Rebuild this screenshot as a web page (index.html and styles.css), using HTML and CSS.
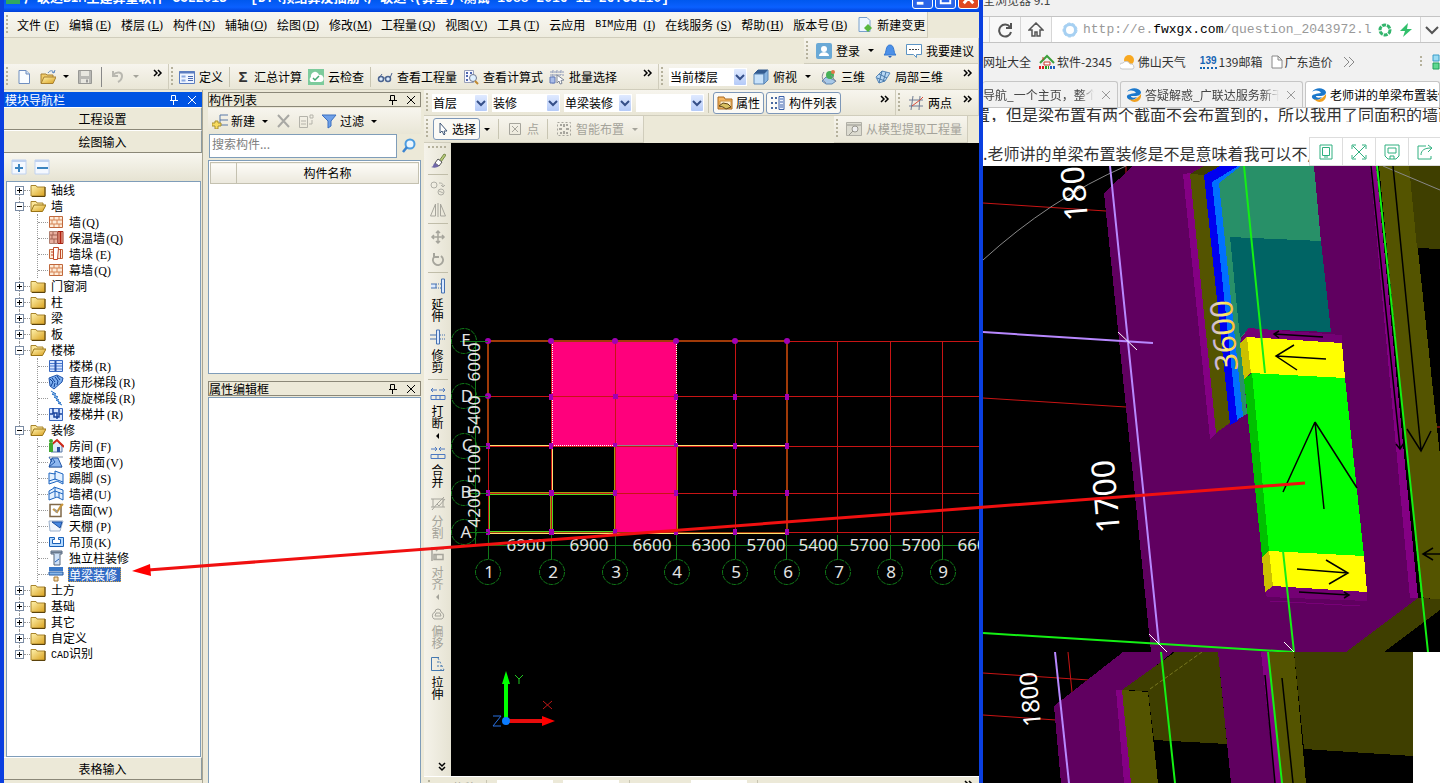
FILE: index.html
```html
<!DOCTYPE html>
<html lang="zh-CN">
<head>
<meta charset="utf-8">
<title>广联达BIM土建算量软件</title>
<link rel="stylesheet" href="styles.css">
</head>
<body>
<svg class="defs" aria-hidden="true">
<defs>
<linearGradient id="gf" x1="0" y1="0" x2="1" y2="1"><stop offset="0" stop-color="#fff3b0"/><stop offset="1" stop-color="#d9a01c"/></linearGradient>
<linearGradient id="gt" x1="0" y1="0" x2="0" y2="1"><stop offset="0.2" stop-color="#b9a6ff"/><stop offset="0.55" stop-color="#fff36a"/><stop offset="0.85" stop-color="#ffae2a"/></linearGradient>
<symbol id="folder" viewBox="0 0 16 16"><path d="M1 3.500h5l1 1.500h8v9H1z" fill="url(#gf)" stroke="#a8842c"/><path d="M15 5v9.500H2" fill="none" stroke="#5c430c"/></symbol>
<symbol id="folder-open" viewBox="0 0 16 16"><path d="M1 13V3.500h5l1 1.500h6v3" fill="#fbe69b" stroke="#a8842c"/><path d="M1 13.500l3-6.500h12l-3.500 6.500z" fill="url(#gf)" stroke="#9a7415"/></symbol>
<symbol id="brick" viewBox="0 0 16 16"><path d="M1.500 2.500h13v11h-13z" fill="#fdebd8" stroke="#c0683c"/><path d="M2 6h12M2 10h12M6 3v3M11 3v3M4 6v4M9 6v4M6 10v3M11 10v3" stroke="#d68455" fill="none"/></symbol>
<symbol id="brick-warm" viewBox="0 0 16 16"><path d="M1.500 1.500h8v12h-8z" fill="#e8b0a0" stroke="#b08070"/><path d="M2 5h7M2 9h7M5 2v3M4 5v4M6 9v4" stroke="#a06050"/><path d="M10 1.500h5v12h-5z" fill="#f5c8b0" stroke="#a02818"/><path d="M12.500 1v13" stroke="#b02010" stroke-width="2"/></symbol>
<symbol id="brick-pier" viewBox="0 0 16 16"><path d="M1.500 3.500h13v9h-13z" fill="#fdebd8" stroke="#c0683c"/><path d="M5.500 1.500h5l-1 12h-4zM12.500 3v10M3 6h2M3 9h2" fill="#fff" stroke="#c04828"/></symbol>
<symbol id="stair" viewBox="0 0 16 16"><path d="M1.500 2.500h13v11h-13z" fill="#d5e4ff" stroke="#3868c0"/><path d="M2 5.500h12M2 8h12M2 11h12" stroke="#4878d0"/><path d="M7.500 3v10" stroke="#2450a8" stroke-width="2"/></symbol>
<symbol id="stair-s" viewBox="0 0 16 16"><path d="M1 4l8-3 6 3-1 4-8 7-4-3z" fill="#7fb0f0" stroke="#1c50a8"/><path d="M2 5l3 3M4 4l3 4M7 3l3 4M9 2l3 4M5 8l-2 4M7 9l-1 4M10 7l-1 4" stroke="#0c3c90"/></symbol>
<symbol id="stair-z" viewBox="0 0 16 16"><path d="M3 1l5 3H4l6 3H6l5 3H8l5 3h-3l4 2" fill="none" stroke="#2470c8"/></symbol>
<symbol id="stair-w" viewBox="0 0 16 16"><path d="M1.500 2.500h13v12h-13z" fill="#d5e4ff" stroke="#3868c0"/><path d="M5 2v5h4v6M11 3v8H6V7M2 8h3M11 8h3" fill="none" stroke="#16409c" stroke-width="1.500"/></symbol>
<symbol id="room" viewBox="0 0 16 16"><path d="M3 8v6h11V8L9 2z" fill="#dfeaf8" stroke="#5878a8"/><path d="M2 8l7-6 7 7" fill="none" stroke="#d02818" stroke-width="2"/><path d="M9 9h3v5H9z" fill="#2850a0"/><path d="M1 5h4v9H1z" fill="#40a830"/><circle cx="3" cy="3" r="2" fill="#40a830"/></symbol>
<symbol id="floor" viewBox="0 0 16 16"><path d="M1 3h14M1 13h13l-3-3" fill="none" stroke="#8a96a8"/><path d="M4 4h6l4 9H1z" fill="#8fb8f0" stroke="#2458a8"/><path d="M1 3l3 5M4 4l3 4-6 5" stroke="#2458a8" fill="none"/></symbol>
<symbol id="skirt" viewBox="0 0 16 16"><path d="M1 3l6 1V1l8 3v10l-6-3-2 1-6 2z" fill="#e4f1ff" stroke="#1c64c0"/><path d="M7 3v7M1 11l6-2 8 3" stroke="#1c64c0" fill="none"/></symbol>
<symbol id="apron" viewBox="0 0 16 16"><path d="M1 5l5-3v-1l9 3v10l-6-3-8 3z" fill="#e4f1ff" stroke="#1c64c0"/><path d="M1 8l6-3 8 3M7 2v9M11 6v6" stroke="#1c64c0" fill="none"/></symbol>
<symbol id="wallface" viewBox="0 0 16 16"><path d="M2 2.500h11v12H2z" fill="#fff" stroke="#806848" stroke-width="1.500"/><path d="M5 7l4 3 4-6 2-2" stroke="#c8963c" fill="none" stroke-width="2"/><path d="M6 6l4 3-2 2z" fill="#999"/></symbol>
<symbol id="ceil" viewBox="0 0 16 16"><path d="M1 3h14l-3 10H2z" fill="#f0f5fc" stroke="#9ab0cc"/><path d="M4 4h10l-2 6z" fill="#4888e0" stroke="#1c50a0"/></symbol>
<symbol id="hang" viewBox="0 0 16 16"><path d="M1.500 3.500h5v2h-2v4h8v-4h-2v-2h5v9h-14z" fill="#b8dcff" stroke="#1860b8"/></symbol>
<symbol id="col" viewBox="0 0 16 16"><path d="M3 1h11v3h-2v11H6V4H3z" fill="#cfe2f8" stroke="#56677c"/><path d="M3 1.500h11v2H3z" fill="#68788c"/><path d="M7 12l4-3" stroke="#2460b8"/></symbol>
<symbol id="beam" viewBox="0 0 16 16"><path d="M1 1h14v4H1z" fill="#3a78c8"/><path d="M1 6h14v3H1z" fill="#88b8ec" stroke="#2458a0"/><path d="M6 11h4v4H6z" fill="#f8dcae" stroke="#a87830"/></symbol>
<symbol id="newdoc" viewBox="0 0 16 16"><path d="M3 1.500h7l3.500 3.500v9.500H3z" fill="#fafdff" stroke="#6f8fc0"/><path d="M10 1.500V5h3.500" fill="#cfe0f5" stroke="#6f8fc0"/></symbol>
<symbol id="open" viewBox="0 0 16 16"><path d="M1 14V5h5l1 1h6v3" fill="#f0cc6a" stroke="#a88030"/><path d="M1 14.500L4 8h12l-3 6.500z" fill="url(#gf)" stroke="#a88030"/><path d="M8 4c2-3 5-3 6 0m-2-1l2 1 1-3" fill="none" stroke="#5d88c0"/></symbol>
<symbol id="save" viewBox="0 0 16 16"><path d="M1.500 1.500h13v13h-13z" fill="#b8b8b4" stroke="#989894"/><path d="M4 2h8v5H4zM4 10h8v4H4z" fill="#e8e7e0"/><path d="M9 10.500h2v3H9z" fill="#999"/></symbol>
<symbol id="undo" viewBox="0 0 16 16"><path d="M3 6c4-4 9-3 9 1 0 3-2 5-4 6M3 2v5h5" fill="none" stroke="#b9b8b0" stroke-width="2"/></symbol>
<symbol id="define" viewBox="0 0 16 16"><path d="M.5 2.500h15v12H.5z" fill="#eef4ff" stroke="#5a7cc0"/><path d="M.5 2h15v2.500H.5z" fill="#5a7cc0"/><path d="M2.500 6.500h4v2h-4zM2.500 10.500h4v2h-4z" fill="#8aa8e0"/><path d="M9 7.500h5M9 9.500h5M9 11.500h5" stroke="#4868b0"/></symbol>
<symbol id="cloudok" viewBox="0 0 16 16"><path d="M0 0h16v16H0z" fill="#7ccb9c"/><path d="M3 13a3 3 0 0 1 0-5 4 4 0 0 1 8-2 3.500 3.500 0 0 1 2 7z" fill="#fff"/><path d="M5 9l2 2 4-4" stroke="#40a870" stroke-width="1.500" fill="none"/></symbol>
<symbol id="glasses" viewBox="0 0 16 16"><circle cx="4" cy="10" r="2.500" fill="#dfeeff" stroke="#4c6490" stroke-width="1.500"/><circle cx="11" cy="10" r="2.500" fill="#dfeeff" stroke="#4c6490" stroke-width="1.500"/><path d="M6 9h3M2 9l3-4M13 9l2-5" stroke="#4c6490" fill="none"/></symbol>
<symbol id="calc" viewBox="0 0 16 16"><path d="M1.500 1.500h9v12h-9z" fill="#f8f8ff" stroke="#98a0b8"/><path d="M3 4h2M7 4h2M3 7h2M3 11h2" stroke="#5068b0" stroke-width="2"/><circle cx="10" cy="9" r="3.500" fill="#dff0ff" stroke="#707890"/><path d="M12 12l3 3" stroke="#c08830" stroke-width="2"/></symbol>
<symbol id="batch" viewBox="0 0 16 16"><path d="M1 3h14M1 6h14M4 1v14M8 1v5M12 1v5" stroke="#8c98b8" stroke-dasharray="3 1"/><path d="M1 8h5v6H1z" fill="#a8bce8" stroke="#6078b8"/><path d="M8 6l7 5-3 .5 1 3-2 .5-1-3-2 2z" fill="#fff" stroke="#808898"/></symbol>
<symbol id="cube" viewBox="0 0 16 16"><path d="M1 5l4-4h10l-4 4z" fill="#345c90" stroke="#345c90"/><path d="M1 5h10v10H1z" fill="#c8e2fa" stroke="#5c88b8"/><path d="M11 5l4-4v10l-4 4z" fill="#88b4e0" stroke="#5c88b8"/></symbol>
<symbol id="view3" viewBox="0 0 16 16"><path d="M1 12l4-4 6 2 4 2-4 3H5z" fill="#a8c8e8" stroke="#6088b0"/><circle cx="9" cy="6" r="4" fill="#48b058"/><circle cx="12" cy="3" r="2" fill="#e07848"/><path d="M3 3c-3 4-2 8 2 11M10 6l5 7" stroke="#889" fill="none"/></symbol>
<symbol id="part3" viewBox="0 0 16 16"><path d="M1 8l6-6 8 2-5 8-6 2z" fill="#b8d8f4" stroke="#5888b8"/><path d="M4 5l8 4M7 2L4 14M11 3L8 13M2 9l8 3" stroke="#4878a8" fill="none"/></symbol>
<symbol id="user" viewBox="0 0 16 16"><rect width="16" height="16" rx="2" fill="#6aa9d6"/><circle cx="8" cy="6" r="3" fill="#fff"/><path d="M3 13c0-5 10-5 10 0z" fill="#fff"/></symbol>
<symbol id="bell" viewBox="0 0 16 16"><path d="M2 12c3-2 1-10 6-10s3 8 6 10z" fill="#4c90e8" stroke="#3478d0"/><path d="M6 13h4l-2 2z" fill="#2860b8"/></symbol>
<symbol id="chat" viewBox="0 0 16 16"><path d="M.5 1.500h15v10h-5v3l-3-3h-7z" fill="#fff" stroke="#5c94c4"/><path d="M3 6.500h10" stroke="#444" stroke-dasharray="2 1"/></symbol>
<symbol id="docadd" viewBox="0 0 16 16"><path d="M2 .5h8l3 3v11H2z" fill="#eef7ff" stroke="#78a0cc"/><path d="M11 7l4 4-4 4-4-4z" fill="#58b840"/></symbol>
<symbol id="pin" viewBox="0 0 12 12"><path d="M3.500 1.500h4v5h-4zM7.500 2v5M2 6.500h8M5.500 7v4" fill="none" stroke="currentColor"/></symbol>
<symbol id="close" viewBox="0 0 12 12"><path d="M2 2l8 8M10 2l-8 8" fill="none" stroke="currentColor"/></symbol>
<symbol id="add" viewBox="0 0 16 16"><path d="M1 1h14v14H1z" fill="#f4f8ff" stroke="#c0d2f0"/><path d="M1 1h14v2H1z" fill="#c0d2f0"/><path d="M8 5v8M4 9h8" stroke="#3c84c0" stroke-width="2"/></symbol>
<symbol id="minus" viewBox="0 0 16 16"><path d="M1 1h14v14H1z" fill="#f4f8ff" stroke="#c0d2f0"/><path d="M1 1h14v2H1z" fill="#c0d2f0"/><path d="M3 9h11" stroke="#3c84c0" stroke-width="2"/></symbol>
<symbol id="newitem" viewBox="0 0 16 16"><path d="M8 2h8M8 7h8M8 12h8M8 2v10" stroke="#5878a8" fill="none"/><path d="M3 8h3v2h3v3H6v3H3v-3H0v-3h3z" fill="#f8dc60" stroke="#a89030"/></symbol>
<symbol id="del" viewBox="0 0 16 16"><path d="M3 2l11 12M14 2L3 14" stroke="#a8a8a4" stroke-width="2"/></symbol>
<symbol id="copyg" viewBox="0 0 16 16"><path d="M1.500 3.500h8v11h-8zM12 2h3v3h-3zM14 7v4h-3M3 8h5M3 11h5" fill="none" stroke="#b4b3aa"/></symbol>
<symbol id="funnel" viewBox="0 0 16 16"><path d="M1 2h14L10 8v5l-3 2V8z" fill="#6ea0e8" stroke="#3c70c0"/></symbol>
<symbol id="mag" viewBox="0 0 16 16"><circle cx="9" cy="6" r="4.500" fill="#eaf6ff" stroke="#4c9ce0" stroke-width="2"/><path d="M6 9l-4 5" stroke="#3c84d0" stroke-width="2.500"/></symbol>
<symbol id="prop" viewBox="0 0 16 16"><path d="M1 2h6l1 2h7v10H1z" fill="#f8b860" stroke="#a86820"/><path d="M3 6h11v7H3z" fill="#fff0d0" stroke="#c89040"/><path d="M2 11l4-3 5 1 3 3-5 2-3-2z" fill="#d8c060" stroke="#604818"/></symbol>
<symbol id="list" viewBox="0 0 16 16"><path d="M1 3h2M1 8h2M1 13h2M5 3h2M5 8h2M5 13h2" stroke="#4868a0" stroke-width="2"/><path d="M9 1.500h5v13H9z" fill="#eef4ff" stroke="#3c60a8"/><path d="M10 4h3M10 7h3M10 10h3M10 12h3" stroke="#3c60a8"/></symbol>
<symbol id="twopt" viewBox="0 0 16 16"><path d="M5 1L3 15M12 1l-1 14M1 5h14M1 11h14" stroke="#707c94"/><path d="M4 11l8-6 3-3" fill="none" stroke="#d84838"/></symbol>
<symbol id="cursor" viewBox="0 0 12 16"><path d="M3 2v10l2-2 2 4 1-1-1-3h3z" fill="#fff" stroke="#405878"/></symbol>
<symbol id="boxx" viewBox="0 0 16 16"><path d="M2.500 2.500h11v11h-11zM5 5l6 6M11 5l-6 6" fill="none" stroke="#a6a59c"/></symbol>
<symbol id="smart" viewBox="0 0 16 16"><path d="M1.500 1.500h13v13h-13z" fill="none" stroke="#a6a59c" stroke-dasharray="2 2"/><path d="M8 3v3M8 10v3M3 8h3M10 8h3M4 4h2M10 4h2M4 12h2M10 12h2" stroke="#908f88" stroke-width="1.500"/></symbol>
<symbol id="extract" viewBox="0 0 16 16"><path d="M.5 1.500h15v13H.5z" fill="#dcdbd0" stroke="#b0afa6"/><circle cx="9" cy="8" r="3" fill="#eee" stroke="#97968e"/><path d="M7 10l-4 4M1 4h14" stroke="#97968e"/></symbol>
<symbol id="brush" viewBox="0 0 16 16"><path d="M9 8l5-7 2 1-5 7z" fill="#b8cc78" stroke="#78884c"/><path d="M5 10l3-4 4 3-3 4z" fill="#fff" stroke="#555"/><path d="M1 14c3 0 2-4 4-4l4 3c-2 2-5 2-8 1z" fill="#7068a8"/></symbol>
<symbol id="copy2" viewBox="0 0 16 16"><circle cx="4" cy="5" r="3" fill="none" stroke="#b0afa6"/><circle cx="11" cy="12" r="3" fill="none" stroke="#b0afa6"/><path d="M9 11l4 2M9 3c4 0 4 1 4 4m-2-2l2 2 2-2" fill="none" stroke="#b0afa6"/></symbol>
<symbol id="mirror" viewBox="0 0 16 16"><path d="M5.500 2v12h-5zM10.500 2v12h5zM8 1v14" fill="none" stroke="#a6a59c"/></symbol>
<symbol id="move" viewBox="0 0 16 16"><path d="M8 2v12M2 8h12M6 4l2-2 2 2M6 12l2 2 2-2M4 6L2 8l2 2M12 6l2 2-2 2" fill="none" stroke="#a6a59c" stroke-width="1.500"/></symbol>
<symbol id="rotate" viewBox="0 0 16 16"><path d="M4 6a5 5 0 1 0 7-1M4 2v4h5" fill="none" stroke="#a6a59c" stroke-width="2"/></symbol>
<symbol id="extend" viewBox="0 0 16 16"><path d="M11.500 1v14h3V1zM1 6h5v4H1" fill="#dceaff" stroke="#4470b0"/><path d="M6 6h5M6 10h5" stroke="#4470b0" stroke-dasharray="1 1"/></symbol>
<symbol id="trim" viewBox="0 0 16 16"><path d="M6.500 1v14h3V1z" fill="#dceaff" stroke="#4470b0"/><path d="M0 6h6M0 10h6" stroke="#4470b0"/><path d="M10 6h6M10 10h6" stroke="#4470b0" stroke-dasharray="1 1"/></symbol>
<symbol id="break" viewBox="0 0 16 16"><path d="M1 10.500h14v4H1zM6 10v4M10 10v4M7 5H1M3 3L1 5l2 2M9 5h6M13 3l2 2-2 2" fill="none" stroke="#4c78c0"/></symbol>
<symbol id="merge" viewBox="0 0 16 16"><path d="M1 10.500h14v4H1zM8 10v4M1 5h6M5 3l2 2-2 2M15 5H9M11 3L9 5l2 2" fill="none" stroke="#4c78c0"/></symbol>
<symbol id="split" viewBox="0 0 16 16"><path d="M1 4h13M1 12h14M3 4v8M13 4v8M2 15l5-6 7-7M7 9l2 2 6-7" fill="none" stroke="#a6a59c"/></symbol>
<symbol id="align" viewBox="0 0 16 16"><path d="M2 1v14M4 3h10M4 8.500h9v5H4zM6 8v5M9 2L6 5" fill="none" stroke="#a6a59c" stroke-width="1.500"/></symbol>
<symbol id="offset" viewBox="0 0 16 16"><path d="M5 7a3 3 0 1 1 6 0 4 4 0 0 1 1 7H4a4 4 0 0 1 1-7zM6 8h4l1 3H5z" fill="none" stroke="#a6a59c"/></symbol>
<symbol id="stretch" viewBox="0 0 16 16"><path d="M9 1.500H1.500v13H14" fill="none" stroke="#4478b0"/><path d="M8 2l6 12M8 5v8M11 9v5" fill="none" stroke="#4478b0" stroke-dasharray="2 2"/></symbol>
<symbol id="chev" viewBox="0 0 12 16"><path d="M2 6l4 4 4-4" fill="none" stroke="#354f88" stroke-width="2"/></symbol>
<symbol id="more" viewBox="0 0 10 8"><path d="M1 1l3 3-3 3M5 1l3 3-3 3" fill="none" stroke="#000" stroke-width="1.500"/></symbol>
<symbol id="elogo" viewBox="0 0 18 16"><path d="M2 5C5 0 14 0 16 5c0 3-3 4-6 4H6c0 2 3 2 6 1-3 5-11 3-10-1 1-2 4-2 9-3C9 3 5 3 2 5z" fill="#1b78cc"/><path d="M4 12c4 2 8 0 12-5 1 7-7 11-12 5z" fill="#f0a020"/></symbol>
</defs>
</svg>

<div class="desktop">
<main class="app">
  <header class="titlebar">
    <span class="badge">广</span>
    <span class="caption">广联达<span class="tm">BIM</span>土建算量软件<span class="tm"> GCL2013 - [D:\</span>预结算及抽筋<span class="tm">\</span>广联达<span class="tm">\(</span>算量<span class="tm">)\</span>测试<span class="tm">-1988-2016-12-26.GCL10]</span></span>
    <span class="winbtns"><button aria-label="最小化"><svg viewBox="0 0 20 20"><path d="M4 15h7" stroke="#fff" stroke-width="3"/></svg></button><button aria-label="最大化"><svg viewBox="0 0 20 20"><path d="M5 4h10v11H5z" fill="none" stroke="#fff" stroke-width="2"/></svg></button><button class="x" aria-label="关闭"><svg viewBox="0 0 20 20"><path d="M5 4l10 11M15 4L5 15" stroke="#fff" stroke-width="3"/></svg></button></span>
  </header>
  <nav class="menubar">
    <i class="grip"></i>
    <button>文件<span class="k">(<u>F</u>)</span></button><button>编辑<span class="k">(<u>E</u>)</span></button><button>楼层<span class="k">(<u>L</u>)</span></button><button>构件<span class="k">(<u>N</u>)</span></button><button>辅轴<span class="k">(<u>O</u>)</span></button><button>绘图<span class="k">(<u>D</u>)</span></button><button>修改<span class="k">(<u>M</u>)</span></button><button>工程量<span class="k">(<u>Q</u>)</span></button><button>视图<span class="k">(<u>V</u>)</span></button><button>工具<span class="k">(<u>T</u>)</span></button><button>云应用</button><button><span class="m">BIM</span>应用<span class="k">(<u>I</u>)</span></button><button>在线服务<span class="k">(<u>S</u>)</span></button><button>帮助<span class="k">(<u>H</u>)</span></button><button>版本号<span class="k">(<u>B</u>)</span></button><button class="tool"><svg><use href="#docadd"/></svg>新建变更</button>
  </nav>
  <div class="account">
    <div class="band">
      <i class="grip"></i>
      <button class="tool"><svg><use href="#user"/></svg>登录<b class="tri"></b></button>
      <button class="tool" aria-label="通知"><svg><use href="#bell"/></svg></button>
      <button class="tool"><svg><use href="#chat"/></svg>我要建议</button>
    </div>
  </div>
  <div class="toolrow">
    <div class="band files">
      <i class="grip"></i>
      <button class="tool" aria-label="新建"><svg><use href="#newdoc"/></svg></button>
      <button class="tool" aria-label="打开"><svg><use href="#open"/></svg><b class="tri"></b></button>
      <button class="tool" aria-label="保存"><svg><use href="#save"/></svg></button>
      <i class="sep dark"></i>
      <button class="tool off" aria-label="撤销"><svg><use href="#undo"/></svg><b class="tri"></b></button>
      <svg class="more"><use href="#more"/></svg>
    </div>
    <div class="band calcs">
      <i class="grip"></i>
      <button class="tool"><svg><use href="#define"/></svg>定义</button>
      <i class="sep"></i>
      <button class="tool"><span class="sigma">Σ</span>汇总计算</button>
      <button class="tool"><svg><use href="#cloudok"/></svg>云检查</button>
      <i class="sep"></i>
      <button class="tool"><svg><use href="#glasses"/></svg>查看工程量</button>
      <button class="tool"><svg><use href="#calc"/></svg>查看计算式</button>
      <button class="tool"><svg><use href="#batch"/></svg>批量选择</button>
      <svg class="more"><use href="#more"/></svg>
    </div>
    <div class="band views">
      <i class="grip"></i>
      <span class="sel wide"><select aria-label="楼层范围"><option>当前楼层</option></select><i><svg><use href="#chev"/></svg></i></span>
      <button class="tool"><svg><use href="#cube"/></svg>俯视<b class="tri"></b></button>
      <button class="tool"><svg><use href="#view3"/></svg>三维</button>
      <button class="tool"><svg><use href="#part3"/></svg>局部三维</button>
      <svg class="more"><use href="#more"/></svg>
    </div>
  </div>
  <div class="work">
    <aside class="modules">
      <h2 class="head active"><span>模块导航栏</span><svg><use href="#pin"/></svg><svg><use href="#close"/></svg></h2>
      <button class="bar">工程设置</button>
      <button class="bar">绘图输入</button>
      <div class="treebtns"><button aria-label="展开"><svg><use href="#add"/></svg></button><button aria-label="折叠"><svg><use href="#minus"/></svg></button></div>
      <ul class="tree">
        <li><p><i class="exp plus"></i><svg><use href="#folder"/></svg><span>轴线</span></p></li>
        <li><p><i class="exp"></i><svg><use href="#folder-open"/></svg><span>墙</span></p>
          <ul><li><svg><use href="#brick"/></svg><span>墙<span class="k">(Q)</span></span></li><li><svg><use href="#brick-warm"/></svg><span>保温墙<span class="k">(Q)</span></span></li><li><svg><use href="#brick-pier"/></svg><span>墙垛<span class="k">(E)</span></span></li><li><svg><use href="#brick"/></svg><span>幕墙<span class="k">(Q)</span></span></li></ul></li>
        <li><p><i class="exp plus"></i><svg><use href="#folder"/></svg><span>门窗洞</span></p></li>
        <li><p><i class="exp plus"></i><svg><use href="#folder"/></svg><span>柱</span></p></li>
        <li><p><i class="exp plus"></i><svg><use href="#folder"/></svg><span>梁</span></p></li>
        <li><p><i class="exp plus"></i><svg><use href="#folder"/></svg><span>板</span></p></li>
        <li><p><i class="exp"></i><svg><use href="#folder-open"/></svg><span>楼梯</span></p>
          <ul><li><svg><use href="#stair"/></svg><span>楼梯<span class="k">(R)</span></span></li><li><svg><use href="#stair-s"/></svg><span>直形梯段<span class="k">(R)</span></span></li><li><svg><use href="#stair-z"/></svg><span>螺旋梯段<span class="k">(R)</span></span></li><li><svg><use href="#stair-w"/></svg><span>楼梯井<span class="k">(R)</span></span></li></ul></li>
        <li><p><i class="exp"></i><svg><use href="#folder-open"/></svg><span>装修</span></p>
          <ul><li><svg><use href="#room"/></svg><span>房间<span class="k">(F)</span></span></li><li><svg><use href="#floor"/></svg><span>楼地面<span class="k">(V)</span></span></li><li><svg><use href="#skirt"/></svg><span>踢脚<span class="k">(S)</span></span></li><li><svg><use href="#apron"/></svg><span>墙裙<span class="k">(U)</span></span></li><li><svg><use href="#wallface"/></svg><span>墙面<span class="k">(W)</span></span></li><li><svg><use href="#ceil"/></svg><span>天棚<span class="k">(P)</span></span></li><li><svg><use href="#hang"/></svg><span>吊顶<span class="k">(K)</span></span></li><li><svg><use href="#col"/></svg><span>独立柱装修</span></li><li><svg><use href="#beam"/></svg><span class="picked">单梁装修</span></li></ul></li>
        <li><p><i class="exp plus"></i><svg><use href="#folder"/></svg><span>土方</span></p></li>
        <li><p><i class="exp plus"></i><svg><use href="#folder"/></svg><span>基础</span></p></li>
        <li><p><i class="exp plus"></i><svg><use href="#folder"/></svg><span>其它</span></p></li>
        <li><p><i class="exp plus"></i><svg><use href="#folder"/></svg><span>自定义</span></p></li>
        <li><p><i class="exp plus"></i><svg><use href="#folder"/></svg><span><span class="m">CAD</span>识别</span></p></li>
      </ul>
      <button class="bar">表格输入</button>
    </aside>
    <section class="parts">
      <h2 class="head"><span>构件列表</span><svg><use href="#pin"/></svg><svg><use href="#close"/></svg></h2>
      <div class="partbtns">
        <button class="tool"><svg><use href="#newitem"/></svg>新建<b class="tri"></b></button>
        <button class="tool" aria-label="删除"><svg><use href="#del"/></svg></button>
        <button class="tool" aria-label="复制"><svg><use href="#copyg"/></svg></button>
        <button class="tool"><svg><use href="#funnel"/></svg>过滤<b class="tri"></b></button>
      </div>
      <div class="search"><input aria-label="搜索构件" placeholder="搜索构件..."><button aria-label="搜索"><svg><use href="#mag"/></svg></button></div>
      <div class="listbox"><table><thead><tr><th class="idx"></th><th>构件名称</th></tr></thead></table></div>
      <h2 class="head"><span>属性编辑框</span><svg><use href="#pin"/></svg><svg><use href="#close"/></svg></h2>
      <div class="props"></div>
    </section>
    <section class="drawing">
      <div class="toolrow">
        <div class="band picks">
          <i class="grip"></i>
          <span class="sel s1"><select aria-label="楼层"><option>首层</option></select><i><svg><use href="#chev"/></svg></i></span>
          <span class="sel s2"><select aria-label="类别"><option>装修</option></select><i><svg><use href="#chev"/></svg></i></span>
          <span class="sel s2"><select aria-label="构件类型"><option>单梁装修</option></select><i><svg><use href="#chev"/></svg></i></span>
          <span class="sel s2"><select aria-label="构件"><option></option></select><i><svg><use href="#chev"/></svg></i></span>
          <i class="sep"></i>
          <button class="tool on"><svg><use href="#prop"/></svg>属性</button>
          <button class="tool on"><svg><use href="#list"/></svg>构件列表</button>
          <svg class="more"><use href="#more"/></svg>
        </div>
        <div class="band pts">
          <i class="grip"></i>
          <button class="tool"><svg><use href="#twopt"/></svg>两点</button>
          <svg class="more"><use href="#more"/></svg>
        </div>
      </div>
      <div class="toolrow second">
        <div class="band">
          <i class="grip"></i>
          <button class="tool on"><svg class="cur"><use href="#cursor"/></svg>选择</button><b class="tri"></b>
          <i class="sep"></i>
          <button class="tool off"><svg><use href="#boxx"/></svg>点</button>
          <i class="sep"></i>
          <button class="tool off"><svg><use href="#smart"/></svg>智能布置<b class="tri"></b></button>
        </div>
        <div class="band right">
          <i class="grip"></i>
          <button class="tool off"><svg><use href="#extract"/></svg>从模型提取工程量</button>
        </div>
      </div>
      <div class="stage">
        <div class="edits">
          <i class="hgrip"></i>
          <button aria-label="格式刷"><svg><use href="#brush"/></svg></button><hr>
          <button aria-label="复制"><svg><use href="#copy2"/></svg></button>
          <button aria-label="镜像"><svg><use href="#mirror"/></svg></button><hr>
          <button aria-label="移动"><svg><use href="#move"/></svg></button>
          <button aria-label="旋转"><svg><use href="#rotate"/></svg></button><hr>
          <button class="vt"><svg><use href="#extend"/></svg><span>延伸</span></button>
          <button class="vt"><svg><use href="#trim"/></svg><span>修剪</span></button><hr>
          <button class="vt"><svg><use href="#break"/></svg><span>打断</span><b class="ltri"></b></button>
          <button class="vt"><svg><use href="#merge"/></svg><span>合并</span></button>
          <button class="vt off"><svg><use href="#split"/></svg><span>分割</span></button>
          <button class="vt off"><svg><use href="#align"/></svg><span>对齐</span><b class="ltri"></b></button>
          <button class="vt off"><svg><use href="#offset"/></svg><span>偏移</span></button>
          <button class="vt"><svg><use href="#stretch"/></svg><span>拉伸</span></button>
          <svg class="down" viewBox="0 0 10 10"><path d="M2 1l3 3 3-3M2 5l3 3 3-3" fill="none" stroke="#000" stroke-width="1.500"/></svg>
        </div>
        <svg class="plan" viewBox="451 143 528 633" preserveAspectRatio="xMinYMin slice" role="img" aria-label="轴网平面图">
          <path d="M552 341h124v105H552zM615 446h62v87h-62z" fill="#ff007c"/>
          <g stroke="#c81414" fill="none">
            <path d="M488 341.500h491M488 396.500h491M488 446.500h491M488 493.500h491M488 532.500h491M488.500 341v192M551.500 341v192M615.500 341v192M676.500 341v192M735.500 341v192M786.500 341v192M837.500 341v192M890.500 341v192M942.500 341v192"/>
            <path d="M488 341h299M488 341v105M787 341v192M488 533h299" stroke="#a03a08" stroke-width="2"/>
            <path d="M488 445.500h64M677 445.500h110M552.500 446v47M488 533.500h299" stroke="#ffe070"/>
            <path d="M488 492.500h127M550.500 493v40M614.500 446v86M677.500 446v86" stroke="#a09a10"/>
            <path d="M488 494.500h127M489.500 493v39M552.500 494v38M488 531.500h127" stroke="#50d820"/>
            <path d="M552.500 342v104M552 445.500h64M676.500 342v104" stroke="#fff" stroke-dasharray="1 1"/>
            <path d="M616 445.500h60" stroke="#888"/>
          </g>
          <g fill="#a000b4">
            <circle cx="488" cy="341" r="3"/><circle cx="551" cy="341" r="3"/><circle cx="615" cy="341" r="3"/><circle cx="676" cy="341" r="3"/><circle cx="735" cy="341" r="3"/><circle cx="787" cy="341" r="3"/><circle cx="488" cy="396" r="3"/>
            <path d="M549 394h4v6h-4zM613 394h5v5h-5zM674 394h4v6h-4zM733 394h4v6h-4zM785 394h4v6h-4zM486 443h4v6h-4zM549 443h4v6h-4zM613 443h4v4h-4zM674 443h4v4h-4zM733 443h4v6h-4zM785 443h4v6h-4zM486 490h4v6h-4zM549 490h5v6h-5zM613 490h4v6h-4zM674 490h4v6h-4zM733 490h4v6h-4zM785 490h4v6h-4zM486 529h4v6h-4zM549 529h5v6h-5zM613 529h4v6h-4zM674 529h4v6h-4zM733 529h4v6h-4zM785 529h4v6h-4z"/>
          </g>
          <g fill="none" stroke="#107818">
            <path d="M475.500 341v205M475 545.500h504M488.500 535v24M551.500 535v24M615.500 535v24M676.500 535v24M735.500 535v24M786.500 535v24M837.500 535v24M890.500 535v24M942.500 535v24M460 341.500h28M470 396.500h18M470 446.500h18M470 493.500h18M470 532.500h18"/>
            <g stroke-dasharray="5 1"><circle cx="464" cy="341" r="12.500"/><circle cx="464" cy="396" r="12.500"/><circle cx="464" cy="446" r="12.500"/><circle cx="464" cy="493" r="12.500"/><circle cx="464" cy="532" r="12.500"/><circle cx="488" cy="572" r="12.500"/><circle cx="552" cy="572" r="12.500"/><circle cx="615" cy="572" r="12.500"/><circle cx="677" cy="572" r="12.500"/><circle cx="735" cy="572" r="12.500"/><circle cx="787" cy="572" r="12.500"/><circle cx="838" cy="572" r="12.500"/><circle cx="890" cy="572" r="12.500"/><circle cx="943" cy="572" r="12.500"/></g>
          </g>
          <g class="dim">
            <text x="526" y="551">6900</text><text x="589" y="551">6900</text><text x="652" y="551">6600</text><text x="711" y="551">6300</text><text x="766" y="551">5700</text><text x="818" y="551">5400</text><text x="869" y="551">5700</text><text x="921" y="551">5700</text><text x="977" y="551">6600</text>
            <text x="489" y="578">1</text><text x="553" y="578">2</text><text x="616" y="578">3</text><text x="677" y="578">4</text><text x="736" y="578">5</text><text x="788" y="578">6</text><text x="839" y="578">7</text><text x="891" y="578">8</text><text x="943" y="578">9</text>
            <text x="466" y="346">E</text><text x="467" y="402">D</text><text x="467" y="451">C</text><text x="466" y="498">B</text><text x="466" y="538">A</text>
            <text transform="translate(480 362) rotate(-90)">6000</text><text transform="translate(480 415) rotate(-90)">5400</text><text transform="translate(480 464) rotate(-90)">5100</text><text transform="translate(480 508) rotate(-90)">4200</text>
          </g>
          <path d="M506 720v-38" stroke="#0f0" stroke-width="4"/><path d="M506 671l4 13h-8z" fill="#0f0"/>
          <path d="M508 721h36" stroke="#e80c0c" stroke-width="4"/><path d="M555 721l-13-5v10z" fill="#f00"/><circle cx="506" cy="721" r="4" fill="#0a7cff"/>
          <path d="M515 675l4 4 4-4M519 679v5" stroke="#20c820" fill="none"/><path d="M543 701l9 8M552 701l-9 8" stroke="#c01818"/><path d="M493 716h8l-8 10h8" stroke="#2870e0" fill="none"/>
        </svg>
      </div>
      <footer class="status"><i class="grip"></i><button class="off">不偏移</button><i class="sep"></i><span class="slot"></span><span class="slot"></span><i class="sep"></i><button class="tool"><b class="chip"></b>旋转</button><span class="slot"></span><i class="sep"></i><svg class="more"><use href="#more"/></svg></footer>
    </section>
  </div>
</main>

<aside class="browser">
  <div class="btitle"><span>全浏览器 9.1</span></div>
  <div class="addr">
    <button aria-label="后退"></button>
    <button aria-label="刷新"><svg viewBox="0 0 16 16"><path d="M13 5a6 6 0 1 0 1 5M14 1v5H9" fill="none" stroke="#555" stroke-width="2"/></svg></button>
    <button aria-label="主页"><svg viewBox="0 0 16 16"><path d="M1 8l7-7 7 7h-3v6H9v-4H7v4H4V8z" fill="none" stroke="#555" stroke-width="1.500"/></svg></button>
    <div class="url"><svg viewBox="0 0 16 16"><circle cx="8" cy="8" r="5.500" fill="#fff" stroke="#a6d0f2" stroke-width="3"/><circle cx="8" cy="8" r="7" fill="none" stroke="#a6d0f2" stroke-dasharray="3 2"/></svg><a href="#q">http://e.<b>fwxgx.com</b>/question_2043972.l</a>
      <svg viewBox="0 0 16 16"><circle cx="8" cy="8" r="5" fill="none" stroke="#32b56c" stroke-width="3" stroke-dasharray="4 1"/></svg><svg viewBox="0 0 16 16"><path d="M10 1L2 9h5l-2 6 9-8H9z" fill="#32c06c"/></svg></div>
    <button aria-label="展开"><svg viewBox="0 0 16 16"><path d="M2 5l6 6 6-6" fill="none" stroke="#555" stroke-width="2"/></svg></button>
  </div>
  <div class="marks">
    <a href="#m1">网址大全</a>
    <a href="#m2"><svg viewBox="0 0 16 16"><path d="M1 9l7-7 7 7" fill="none" stroke="#3ca03c" stroke-width="2"/><path d="M4 3v3M5 8h6v3H5z" stroke="#c83828" fill="#fff"/><path d="M0 13.500h5" stroke="#d82020" stroke-width="3" stroke-dasharray="2 1"/><path d="M6 13.500h4" stroke="#20a020" stroke-width="3" stroke-dasharray="2 1"/><path d="M11 13.500h5" stroke="#2060c0" stroke-width="3" stroke-dasharray="2 1"/></svg>软件-2345</a>
    <a href="#m3"><svg viewBox="0 0 16 16"><circle cx="9" cy="6" r="5" fill="#f8a820"/><path d="M2 15a3 3 0 0 1 1-6 4 4 0 0 1 7 1 3 3 0 0 1 3 5z" fill="#fff" stroke="#c8c8c8"/></svg>佛山天气</a>
    <a class="mail" href="#m4"><b class="m139">139</b>139邮箱</a>
    <a href="#m5"><svg class="page" viewBox="0 0 12 16"><path d="M1 2h6l4 4v8H1zM7 2v4h4" fill="#fff" stroke="#888"/></svg>广东造价</a>
    <svg viewBox="0 0 16 16"><path d="M3 3l5 5-5 5M8 3l5 5-5 5" fill="none" stroke="#888"/></svg>
    <span class="ext"><i class="grip"></i><svg viewBox="0 0 16 16"><path d="M1 1h6v6H1z" fill="#9cdcf4" stroke="#389cc8"/><path d="M1 9h6v6H1z" fill="#60d890" stroke="#20a058"/><path d="M9 1h6v14H9z" fill="#389cc8"/></svg></span>
  </div>
  <div class="tabs">
    <div class="tab first"><span>导航_一个主页，整个世界</span><button aria-label="关闭标签"><svg><use href="#close"/></svg></button></div>
    <div class="tab"><svg class="logo"><use href="#elogo"/></svg><span>答疑解惑_广联达服务新干线</span><button aria-label="关闭标签"><svg><use href="#close"/></svg></button></div>
    <div class="tab cur"><svg class="logo"><use href="#elogo"/></svg><span>老师讲的单梁布置装修</span></div>
  </div>
  <article class="post">
    <p class="l1">置，但是梁布置有两个截面不会布置到的，所以我用了同面积的墙面</p>
    <div class="l2"><p>.老师讲的单梁布置装修是不是意味着我可以不用</p>
      <div class="viewtools">
        <button aria-label="手机"><svg viewBox="0 0 16 16"><path d="M2 1h12v14H2zM4.500 3.500h7v8h-7zM6 13h4"/></svg></button><button aria-label="全屏"><svg viewBox="0 0 16 16"><path d="M2 2l12 12M14 2L2 14M1 5V1h4M11 1h4v4M15 11v4h-4M5 15H1v-4"/></svg></button><button aria-label="保存"><svg viewBox="0 0 16 16"><path d="M1 1h14v11l-3 3H4l-3-3zM4 4h8v5H4zM6 15v-3h4v3"/></svg></button><button aria-label="分享"><svg viewBox="0 0 16 16"><path d="M9 2H1v13h13v-3M4 11c0-5 4-7 10-7M11 1l4 3-4 4"/></svg></button>
      </div></div>
    <svg class="scene" viewBox="983 166 457 617" preserveAspectRatio="xMinYMin slice" role="img" aria-label="单梁装修三维视图">
      <defs><clipPath id="ca"><path d="M983 166h457v486H983z"/></clipPath><clipPath id="cb"><path d="M983 652h430v131H983z"/></clipPath></defs>
      <rect x="983" y="166" width="457" height="617" fill="#fff"/>
      <g clip-path="url(#ca)">
        <rect x="983" y="166" width="457" height="486"/>
        <path d="M983 203l123 8M983 398l143 9M1126 166v10M1434 427h6" stroke="#c81414" fill="none"/>
        <g shape-rendering="crispEdges">
        <path d="M1104 193l29-27h243l42 432-72 54h-195z" fill="#600060"/>
        <path d="M1183 174l8-1 26 260-7 6zM1366 166h4l40 432h8l-42-432z" fill="#840084"/>
        <path d="M1190 174l14 0 26 249-14 10z" fill="#545400"/><path d="M1190 174l14-8h17l-16 9z" fill="#3f3f00"/>
        <path d="M1204 175l16-9h18l-24 18 24 237-8 4z" fill="#0000f0"/>
        <path d="M1212 182l26-16h5l-23 18 25 231-8 5z" fill="#0070ff"/>
        <path d="M1219 183l22-17h73l7 76-80 96 6 76-4 2z" fill="#289068"/>
        <path d="M1230 237l91 4 10 91-83-3-8 9z" fill="#006464"/>
        <path d="M1240 342l8-14 94 7v9z" fill="#740074"/>
        <path d="M1247 337l95 6 3 35-94-5z" fill="#ff0"/><path d="M1240 343l7-6 4 36-7 6z" fill="#ccc000"/>
        <path d="M1251 373l94 5 19 178-95-5z" fill="#0f0"/><path d="M1244 379l8-6 17 178-7 6z" fill="#00c000"/>
        <path d="M1269 551l95 5 3 36-94-6z" fill="#ff0"/><path d="M1262 557l7-6 4 35-8 6z" fill="#ccc000"/>
        <path d="M1265 592l8-6 94 6v9l-100-4z" fill="#740074"/><path d="M1270 601l90 5" stroke="#780078"/>
        <path d="M1379 166h30l31 290v144l-19-3z" fill="#545400"/><path d="M1409 166h31v83l-23-1z" fill="#3f3f00"/>
        <path d="M1346 652l72-54 22 1v11l-56 42z" fill="#3f3f00"/>
        </g>
        <path d="M983 260Q1050 199 1126 166M1383 166L1440 190" stroke="#888" fill="none"/>
        <g stroke="#000" stroke-width="1.500" fill="none"><path d="M1323 337l-49-3m5-3l-5 3 5 4M1326 359l-50-3m18-11l-18 11 21 14M1297 569l51 4m-22-13l22 13-19 11M1299 592l50 3m-5-3l5 3-5 3M1315 422l-32 70M1315 422l9 87M1315 422l42 66M1371 166l29 282m-4-4l4 5 4-6M1393 166l28 284m-14-21l14 22 10-20M1440 554h-17m10-6l-10 6 10 6"/></g>
        <path d="M1110 166l49 479M983 332l170 11" stroke="#b888ff" stroke-width="2"/>
        <path d="M1244 166l21 207M1283 551l11 101M1377 166l51 486M983 633l311 19" stroke="#14f014" stroke-width="2"/>
        <path d="M1118 332l19 18M1149 634l18 18M1284 642l10 10" stroke="#fff"/>
        <g class="mark"><text transform="translate(1088 220) rotate(-95)">1800</text><text transform="translate(1120 532) rotate(-95)">1700</text><text class="grad" transform="translate(1238 370) rotate(-95)">3600</text></g>
      </g>
      <g clip-path="url(#cb)">
        <rect x="983" y="652" width="430" height="131"/>
        <path d="M983 673l106 7M983 715l73 5M1068 652l4 40" stroke="#c81414"/>
        <g shape-rendering="crispEdges">
        <path d="M1054 706l69-54h50l-50 40 8 91h-70zM1218 652h45l14 131h-46z" fill="#600060"/>
        <path d="M1116 690h7l8 93h-7zM1261 652h7l14 131h-7z" fill="#840084"/>
        <path d="M1122 690l53-38h43l9 92-73-4-6-49zM1294 652h119v104l-109-7z" fill="#3f3f00"/>
        <path d="M1122 690l26 2 10 91h-27zM1268 652h26l12 131h-24z" fill="#545400"/>
        </g>
        <path d="M1265 675l10 108M1282 678l11 105" stroke="#000" stroke-width="1.500"/>
        <path d="M1161 652l14 131M1268 652l14 131" stroke="#14f014" stroke-width="2"/><path d="M1055 652l14 131" stroke="#b888ff" stroke-width="2"/>
        <path d="M1150 689l52-37" stroke="#77771f" stroke-dasharray="4 2"/>
        <text class="small" transform="translate(1041 726) rotate(-95)">1800</text>
      </g>
    </svg>
  </article>
</aside>
</div>
<svg class="pointer" viewBox="0 0 1440 783" preserveAspectRatio="none" aria-hidden="true"><path d="M1305 483L148 570" stroke="#f01010" stroke-width="3"/><path d="M132 571l18-7 1 12z" fill="#f00"/></svg>
</body>
</html>
```

FILE: styles.css
```css
*{box-sizing:border-box}
body{margin:0;height:100vh;overflow:hidden;font:12px/16px "Noto Sans CJK SC","Liberation Sans",sans-serif;color:#000;background:#ece9d8}
button{border:0;background:none;padding:0;margin:0;font:inherit;color:inherit;display:flex;align-items:center;white-space:nowrap;flex:none}
h2,p,ul{margin:0;padding:0;font-weight:400;list-style:none}
svg{width:16px;height:16px;flex:none;display:block}
.defs{position:absolute;width:0;height:0}
.k{display:inline-block;width:18px;text-align:right;font:12px/14px "Liberation Serif",serif}
.m{font:10px/14px "Liberation Mono",monospace}
.desktop{display:grid;grid-template-columns:minmax(0,983fr) minmax(0,457fr);height:100%}
.pointer{position:absolute;left:0;top:0;width:100%;height:100%;pointer-events:none}

/* application window */
.app{display:flex;flex-direction:column;min-height:0;border:solid #0a3fe0;border-width:0 4px;background:#ece9d8;overflow:hidden}
.titlebar{height:12px;flex:none;display:flex;align-items:flex-end;background:linear-gradient(#0058ee,#0a60ff 60%,#0040d8);overflow:hidden;padding:0 0 0 2px;color:#fff}
.badge{width:14px;height:20px;line-height:20px;background:#30a860;font-size:10px;text-align:center;margin:0 4px 8px 0}
.caption{font-size:13px;line-height:20px;font-weight:700;height:20px;margin-bottom:5px;white-space:pre}
.tm{font:bold 13px/14px "Liberation Mono",monospace}
.winbtns{margin-left:auto;display:flex;gap:2px;margin-bottom:3px}
.winbtns button{width:21px;height:21px;border:1px solid #fff;border-radius:3px;background:#2a64e8}
.winbtns .x{background:#e04820}
.winbtns svg{width:19px;height:19px}
.menubar{height:26px;flex:none;display:flex;align-items:center;gap:10px;padding-left:2px;width:924px;border-right:1px solid #cfccba;border-bottom:1px solid #d0cdbc;background:linear-gradient(#f8f7f2,#eeecdf)}
.menubar .grip{margin-right:-1px}
.grip{width:2px;height:20px;flex:none;background:repeating-linear-gradient(#b5b19c 0 2px,transparent 2px 4px)}
.tool{gap:4px;height:20px}
.tool.on{border:1px solid #7d97b8;border-radius:3px;background:#fbfaf6;padding:0 3px;height:22px;gap:3px}
.off{color:#a4a39a}
.cur{width:12px}
.tri{width:0;height:0;border:solid transparent;border-width:3px 3px 0;border-top-color:currentColor;flex:none}
.tool .tri{margin-left:4px}
.sep{width:1px;height:20px;background:#c8c5b2;flex:none}
.sep.dark{background:#888}
.more{margin:5px 1px 0 auto;width:10px;height:8px;align-self:flex-start}
.band{display:flex;align-items:center;gap:8px;height:100%;padding:0 4px 0 2px;border-right:1px solid #d0cdbc;border-bottom:1px solid #d0cdbc;background:linear-gradient(#f7f5ee,#e9e6d6)}
.account{height:26px;flex:none;display:flex;justify-content:flex-end}
.toolrow{height:26px;flex:none;display:flex}
.files{flex:0 0 165px;gap:8px}
.files .tri{margin-left:3px}
.calcs{flex:0 0 490px;gap:6px}
.views{flex:1;min-width:0;gap:6px}
.views .tool + .tool{margin-left:4px}
.sigma{font:bold 15px/16px "Liberation Sans",sans-serif;width:14px;color:#333}
.sel{display:flex;height:18px;background:#fff;flex:none}
.sel select{appearance:none;border:0;background:none;padding:0 0 0 1px;margin:0;font:inherit;flex:1;min-width:0;color:#000}
.sel i{width:12px;height:16px;margin:1px;background:linear-gradient(#e0eaff,#b4caf8);border-radius:1px}
.sel i svg{width:12px}
.wide{width:78px}
.s1{width:56px}
.s2{width:68px}
.work{flex:1;min-height:0;display:flex}

.head{height:15px;flex:none;display:flex;align-items:center;border:1px solid #8b8878;background:#ece9d8;gap:6px;padding-right:3px;font-size:12px}
.head span{flex:1;line-height:13px}
.head svg{width:12px;height:12px}
.head.active{background:#0054e3;color:#fff;border-color:#0054e3}
.modules{flex:0 0 199px;display:flex;flex-direction:column;padding-top:2px;min-height:0;border-right:1px solid #a8a593;margin-right:5px}
.bar{height:23px;justify-content:center;background:#ece9d8;border:solid;border-width:1px 1px 1px 0;border-color:#fff #8b9aa0 #8b8878 #fff}
.modules > .bar:last-child{margin-bottom:3px}
.treebtns{height:28px;flex:none;display:flex;align-items:center;gap:7px;padding-left:7px;background:linear-gradient(#f8f7f0,#e6e3d2)}
.tree{flex:1;min-height:0;overflow:hidden;margin:0 1px 0 2px;border:1px solid #7f9db9;background:#fff;line-height:16px;position:relative}
.tree > li{margin-left:8px;position:relative}
.tree > li::before{content:"";position:absolute;left:4px;top:0;bottom:0;border-left:1px dotted #999}
.tree > li:last-child::before{bottom:8px}
.tree > li:first-child::before{top:8px}
.tree p{display:flex;align-items:center;height:16px;position:relative}
.tree p::before{content:"";position:absolute;left:9px;top:8px;width:6px;border-top:1px dotted #999}
.tree p svg{margin:0 5px 0 6px}
.exp{width:9px;height:9px;border:1px solid #7b8ca4;position:relative;background:linear-gradient(#000,#000) center/5px 1px no-repeat,#fff}
.exp.plus{background:linear-gradient(#000,#000) center/5px 1px no-repeat,linear-gradient(#000,#000) center/1px 5px no-repeat,#fff}
.tree ul{margin-left:31px;border-left:1px dotted #999;padding:0}
.tree ul li{display:flex;align-items:center;height:16px;white-space:nowrap}
.tree ul li::before{content:"";width:10px;border-top:1px dotted #999}
.tree ul{margin-left:22px}
.tree ul li svg{margin-right:4px}
.tree ul li > span{padding:0 1px}
.tree .picked{background:#316ac5;color:#fff;outline:1px dotted #d0a040;outline-offset:-1px;line-height:15px;padding-right:4px}

.parts{flex:0 0 213px;display:flex;flex-direction:column;padding-top:2px;min-height:0;margin-right:3px}
.parts .head{margin-bottom:1px}
.partbtns{height:26px;flex:none;display:flex;align-items:center;gap:7px;padding-left:4px;background:linear-gradient(#f7f5ee,#e9e6d6)}
.partbtns .tool{gap:3px}
.search{display:flex;height:24px;flex:none;margin-bottom:2px}
.search input{flex:1;min-width:0;border:1px solid #7f9db9;background:#fff;font:inherit;padding:0 2px 4px;margin:0 0 0 1px}
.search input::placeholder{color:#808080;opacity:1}
.search button{width:24px;justify-content:center}
.listbox{height:214px;flex:none;border:1px solid #7f9db9;background:#fff;padding:1px;margin-bottom:7px}
.listbox table{width:100%;border-collapse:collapse}
.listbox th{height:21px;padding:0;font-weight:400;background:linear-gradient(#fdfcf8,#ebe8dc);border:1px solid #c4c1b0}
.listbox .idx{width:26px}
.props{flex:1;border:1px solid #7f9db9;border-bottom:0;background:#fff}

.drawing{flex:1;min-width:0;display:flex;flex-direction:column}
.drawing .band{gap:4px}
.drawing .band.picks{flex:0 0 472px}
.drawing .band.pts{flex:1;min-width:0;gap:8px}
.picks .tool + .tool{margin-left:-2px}
.toolrow.second{height:27px;justify-content:space-between}
.second .band{gap:8px;padding-right:5px}
.second .band .on{margin-left:-3px}
.second .band .on + .tri{margin-left:-4px}
.second .right{margin-right:11px}
.stage{flex:1;min-height:0;display:flex}
.edits{flex:0 0 27px;display:flex;flex-direction:column;align-items:center;padding:3px 0 4px;background:linear-gradient(90deg,#f5f3ea,#e6e3d3)}
.hgrip{width:20px;height:2px;margin-bottom:2px;background:repeating-linear-gradient(90deg,#b5b19c 0 2px,transparent 2px 4px)}
.edits hr{width:20px;border:0;border-top:1px solid #c0bda9;margin:2px 0}
.edits button{height:22px}
.edits .vt{height:auto;flex-direction:column;padding:3px 0 2px;gap:4px}
.vt span{width:12px;white-space:normal;line-height:12px;margin-bottom:2px;word-break:break-all}
.ltri{border:solid transparent;border-width:3px 3px 3px 0;border-right-color:currentColor;margin-top:-2px}
.down{width:10px;height:10px;margin-top:auto;margin-left:8px}
.plan{flex:1;min-width:0;height:100%;background:#000}
.dim{font:17px "Noto Sans",sans-serif;fill:#e4e4e4;text-anchor:middle}
.status{height:7px;flex:none;display:flex;align-items:flex-start;overflow:hidden;gap:10px;padding:3px 4px 0;border-top:1px solid #fff}
.status .slot{width:56px;height:10px;background:#fff}
.status .more{margin-top:0}
.chip{width:13px;height:14px;background:#2468b0}

/* browser window */
.browser{display:flex;flex-direction:column;min-width:0;overflow:hidden;background:#f1f1f1;color:#444}
.btitle{height:16px;flex:none;overflow:hidden;display:flex;align-items:flex-end}
.btitle span{height:16px;margin-bottom:8px;white-space:pre}
.addr{display:flex;height:27px;flex:none;border:solid #c4c4c4;border-width:1px 0}
.addr > button{width:31px;justify-content:center;border-right:1px solid #d6d6d6;background:#f8f8f8}
.addr > button:first-child{width:7px}
.addr > button:last-child{width:20px;border-left:1px solid #d6d6d6;border-right:0;justify-content:flex-end}
.url{flex:1;min-width:0;display:flex;align-items:center;gap:5px;background:#fff;padding:0 6px 0 10px}
.url a{flex:1;min-width:0;overflow:hidden;white-space:nowrap;font:13px/18px "Liberation Mono",monospace;color:#999;text-decoration:none}
.url b{font-weight:400;color:#000}
.marks{height:38px;flex:none;display:flex;align-items:center;gap:8px}
.marks a{display:flex;align-items:center;gap:2px;color:#333;text-decoration:none;white-space:nowrap}
.marks .mail{margin-left:6px}
.marks .page{width:12px}
.m139{font:bold 10px/12px "Liberation Sans",sans-serif;color:#1464b4;border-bottom:2px dotted #1464b4}
.ext{margin-left:auto;display:flex;align-items:center;gap:10px;width:20px;overflow:hidden}
.ext .grip{height:12px}
.tabs{height:27px;flex:none;display:flex;gap:2px;border-bottom:1px solid #c4c4c4}
.tab{flex:0 0 183px;display:flex;align-items:center;gap:2px;border:1px solid #c6c6c6;border-bottom:0;border-radius:3px 3px 0 0;padding:0 5px 0 4px;min-width:0}
.tab span{flex:1;min-width:0;overflow:hidden;white-space:nowrap;mask-image:linear-gradient(90deg,#000 88%,transparent)}
.tab button{margin-left:4px;color:#999}
.tab button svg{width:12px;height:12px}
.tab.first{flex-basis:135px;padding-left:0;border-left:0}
.tab.cur{flex:1;width:auto;background:#fff;color:#000;padding-right:0}
.tab.cur span{mask-image:none}
.tab .logo{width:18px}
.post{flex:1;min-height:0;display:flex;flex-direction:column;background:#fff;color:#333;font-size:16px;overflow:hidden}
.post p{white-space:nowrap}
.l1{height:14px;flex:none;overflow:hidden;line-height:12px;text-indent:-9px}
.l2{display:flex;height:29px;flex:none;margin-top:15px;overflow:hidden}
.l2 p{flex:1;min-width:0;overflow:hidden;line-height:32px}
.viewtools{display:flex;flex:0 0 131px;overflow:hidden;border:1px solid #ddd;border-right:0;background:#fff}
.viewtools button{width:33px;justify-content:center;border-right:1px solid #ddd}
.viewtools svg{fill:none;stroke:#30b080}
.scene{width:100%;flex:1;min-height:0}
.mark{font:32px "Noto Sans",sans-serif;fill:#fff}
.mark .grad{font-size:31px;fill:url(#gt)}
.small{font:24px "Noto Sans",sans-serif;fill:#fff}
```
